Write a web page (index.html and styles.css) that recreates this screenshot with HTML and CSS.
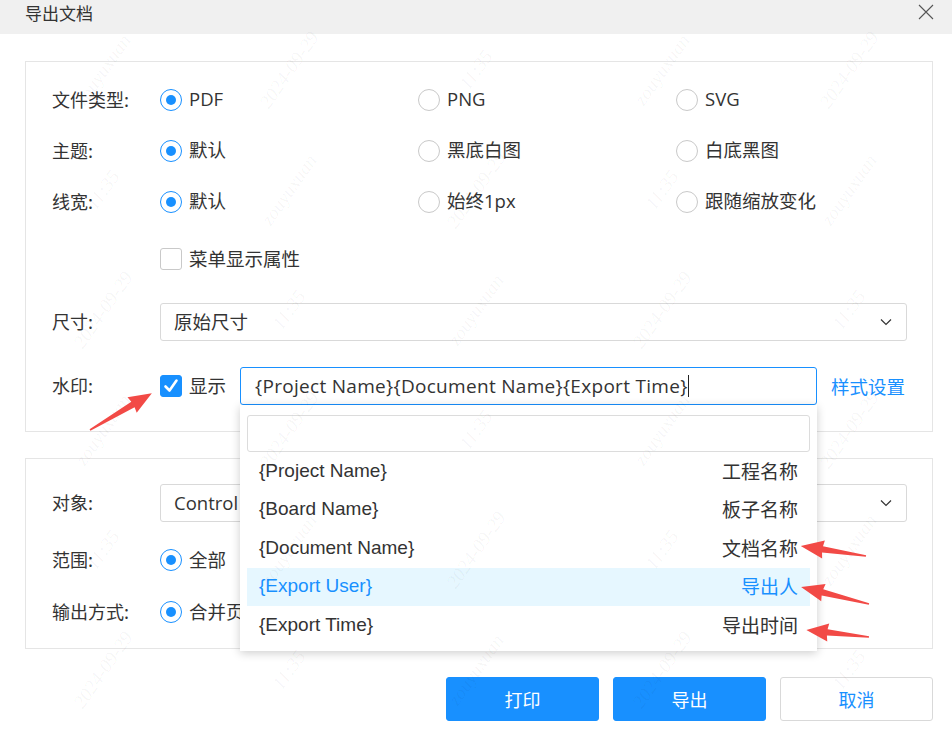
FILE: index.html
```html
<!DOCTYPE html>
<html lang="zh-CN">
<head>
<meta charset="utf-8">
<title>导出文档</title>
<link rel="stylesheet" href="styles.css">
</head>
<body>
<div class="dialog">
  <div class="header">
    <span class="title">导出文档</span>
    <svg class="close" width="16" height="16" viewBox="0 0 16 16"><path d="M1 1L15 15M15 1L1 15" stroke="#555" stroke-width="1.1" fill="none"/></svg>
  </div>

  <div class="content">
    <section class="group group-top">
      <div class="row row-radio">
        <span class="label">文件类型:</span>
        <div class="options">
          <span class="opt"><span class="radio on"></span>PDF</span>
          <span class="opt"><span class="radio"></span>PNG</span>
          <span class="opt"><span class="radio"></span>SVG</span>
        </div>
      </div>
      <div class="row row-radio">
        <span class="label">主题:</span>
        <div class="options">
          <span class="opt"><span class="radio on"></span>默认</span>
          <span class="opt"><span class="radio"></span>黑底白图</span>
          <span class="opt"><span class="radio"></span>白底黑图</span>
        </div>
      </div>
      <div class="row row-radio">
        <span class="label">线宽:</span>
        <div class="options">
          <span class="opt"><span class="radio on"></span>默认</span>
          <span class="opt"><span class="radio"></span>始终1px</span>
          <span class="opt"><span class="radio"></span>跟随缩放变化</span>
        </div>
      </div>
      <div class="row row-check">
        <span class="label"></span>
        <span class="opt"><span class="checkbox"></span>菜单显示属性</span>
      </div>
      <div class="row row-select">
        <span class="label">尺寸:</span>
        <div class="select">
          <span>原始尺寸</span>
          <svg class="chevron" width="12" height="8" viewBox="0 0 12 8"><path d="M1 1.5L6 6.5L11 1.5" stroke="#333" stroke-width="1.2" fill="none"/></svg>
        </div>
      </div>
      <div class="row row-wm">
        <span class="label">水印:</span>
        <span class="opt wm-check"><span class="checkbox checked"><svg width="22" height="22" viewBox="0 0 22 22"><path d="M5.5 11.5L9.5 15.5L16.5 5.5" stroke="#fff" stroke-width="2.6" fill="none" stroke-linecap="round" stroke-linejoin="round"/></svg></span>显示</span>
        <div class="wm-wrap">
          <div class="wm-input">{Project Name}{Document Name}{Export Time}<span class="caret"></span></div>
          <div class="dropdown">
            <div class="dd-search"></div>
            <div class="dd-item"><span>{Project Name}</span><span>工程名称</span></div>
            <div class="dd-item"><span>{Board Name}</span><span>板子名称</span></div>
            <div class="dd-item"><span>{Document Name}</span><span>文档名称</span></div>
            <div class="dd-item active"><span>{Export User}</span><span>导出人</span></div>
            <div class="dd-item"><span>{Export Time}</span><span>导出时间</span></div>
          </div>
        </div>
        <span class="link">样式设置</span>
      </div>
    </section>

    <section class="group group-bottom">
      <div class="row row-select2">
        <span class="label">对象:</span>
        <div class="select">
          <span class="clip">Control</span>
          <svg class="chevron" width="12" height="8" viewBox="0 0 12 8"><path d="M1 1.5L6 6.5L11 1.5" stroke="#333" stroke-width="1.2" fill="none"/></svg>
        </div>
      </div>
      <div class="row row-range">
        <span class="label">范围:</span>
        <span class="opt"><span class="radio on"></span>全部</span>
      </div>
      <div class="row row-output">
        <span class="label">输出方式:</span>
        <span class="opt"><span class="radio on"></span>合并页</span>
      </div>
    </section>

    <div class="footer">
      <button class="btn primary">打印</button>
      <button class="btn primary">导出</button>
      <button class="btn">取消</button>
    </div>
  </div>

  <div class="watermark">
    <span class="wm-t">zouyuxuan</span><span class="wm-t">2024-09-29</span><span class="wm-t">11:35</span><span class="wm-t">zouyuxuan</span><span class="wm-t">2024-09-29</span>
    <span class="wm-t">11:35</span><span class="wm-t">zouyuxuan</span><span class="wm-t">2024-09-29</span><span class="wm-t">11:35</span><span class="wm-t">zouyuxuan</span>
    <span class="wm-t">2024-09-29</span><span class="wm-t">11:35</span><span class="wm-t">zouyuxuan</span><span class="wm-t">2024-09-29</span><span class="wm-t">11:35</span>
    <span class="wm-t">zouyuxuan</span><span class="wm-t">2024-09-29</span><span class="wm-t">11:35</span><span class="wm-t">zouyuxuan</span><span class="wm-t">2024-09-29</span>
    <span class="wm-t">11:35</span><span class="wm-t">zouyuxuan</span><span class="wm-t">2024-09-29</span><span class="wm-t">11:35</span><span class="wm-t">zouyuxuan</span>
    <span class="wm-t">2024-09-29</span><span class="wm-t">11:35</span><span class="wm-t">zouyuxuan</span><span class="wm-t">2024-09-29</span><span class="wm-t">11:35</span>
  </div>

  <svg class="arrows" width="952" height="740" viewBox="0 0 952 740">
    <g fill="#f24a46">
      <polygon transform="translate(90 430) rotate(-30.8)" points="0,-0.8 50,-3.2 49,-9 72,0 49,9 50,3.2 0,0.8"/>
      <polygon transform="translate(866 556) rotate(-171.3)" points="0,-0.8 44,-3.2 43,-9 66,0 43,9 44,3.2 0,0.8"/>
      <polygon transform="translate(869 604) rotate(-166)" points="0,-0.8 48,-3.2 47,-9 70,0 47,9 48,3.2 0,0.8"/>
      <polygon transform="translate(869 637) rotate(-173.7)" points="0,-0.8 42,-3.2 41,-9 63,0 41,9 42,3.2 0,0.8"/>
    </g>
  </svg>
</div>
</body>
</html>
```

FILE: styles.css
```css
* { box-sizing: border-box; }

html, body {
  margin: 0;
  padding: 0;
  background: #fff;
}

body {
  width: 952px;
  height: 740px;
  overflow: hidden;
  font-family: "Open Sans", "Noto Sans CJK SC", sans-serif;
  font-size: 18px;
  color: #333;
  line-height: 1.2;
}

.dialog {
  position: relative;
  width: 952px;
  height: 740px;
  overflow: hidden;
}

.header {
  height: 34px;
  background: #f0f0f0;
  display: flex;
  align-items: center;
  justify-content: space-between;
  padding: 0 18px 0 25px;
}

.title {
  font-family: "Noto Sans CJK SC", sans-serif;
  font-size: 17px;
  line-height: 20px;
  color: #333;
  margin-top: -9px;
}

.close { margin-top: -10px; }

.content {
  padding: 27px 19px 0 25px;
}

.group {
  border: 1px solid #e5e5e5;
  padding: 0 25px 0 26px;
  display: flex;
  flex-direction: column;
}

.group-top { padding-top: 12px; padding-bottom: 26px; }
.group-bottom { margin-top: 26px; padding-top: 25px; padding-bottom: 8px; }

.row {
  display: flex;
  align-items: center;
}

.label {
  width: 108px;
  flex: none;
  font-family: "Noto Sans CJK SC", sans-serif;
}

.row-radio { height: 51px; }
.row-check { height: 64px; }
.row-select { margin-top: 12px; }
.row-wm { margin-top: 26px; height: 38px; }
.row-range { margin-top: 14px; height: 48px; }
.row-output { height: 56px; }

.options {
  display: grid;
  grid-template-columns: 258px 258px 1fr;
  flex: 1;
}

.opt {
  display: inline-flex;
  align-items: center;
  gap: 7px;
  white-space: nowrap;
  font-size: 18.5px;
}

.radio {
  width: 22px;
  height: 22px;
  border: 1px solid #c9c9c9;
  border-radius: 50%;
  display: inline-flex;
  align-items: center;
  justify-content: center;
  flex: none;
}

.radio.on { border-color: #1890ff; }
.radio.on::after {
  content: "";
  width: 10px;
  height: 10px;
  border-radius: 50%;
  background: #1890ff;
}

.checkbox {
  width: 22px;
  height: 22px;
  border: 1px solid #c9c9c9;
  border-radius: 3px;
  flex: none;
  display: inline-flex;
}

.checkbox.checked {
  background: #1890ff;
  border-color: #1890ff;
}

.checkbox.checked svg { margin: -1px; }

.select {
  width: 747px;
  height: 38px;
  border: 1px solid #d9d9d9;
  border-radius: 3px;
  display: flex;
  align-items: center;
  justify-content: space-between;
  padding: 0 14px 0 13px;
  font-size: 18.5px;
}

.wm-check { width: 80px; }

.wm-wrap {
  position: relative;
  width: 577px;
  height: 38px;
  flex: none;
}

.wm-input {
  height: 38px;
  border: 1px solid #1890ff;
  border-radius: 3px;
  display: flex;
  align-items: center;
  padding-left: 14px;
  white-space: nowrap;
  font-size: 19px;
  letter-spacing: 0.3px;
}

.caret {
  display: inline-block;
  width: 1.5px;
  height: 22px;
  background: #222;
}

.link {
  margin-left: 14px;
  color: #1890ff;
  font-family: "Noto Sans CJK SC", sans-serif;
  font-size: 18.5px;
}

.dropdown {
  position: absolute;
  left: 0;
  top: 38px;
  width: 577px;
  height: 246px;
  background: #fff;
  box-shadow: 0 2px 9px rgba(0, 0, 0, 0.2);
  padding: 10px 7px 0 7px;
  z-index: 5;
}

.dd-search {
  height: 37px;
  border: 1px solid #dcdcdc;
  border-radius: 3px;
}

.dd-item {
  height: 38.5px;
  display: flex;
  align-items: center;
  justify-content: space-between;
  padding: 0 12px;
  font-family: "Liberation Sans", "Noto Sans CJK SC", sans-serif;
  font-size: 19px;
  color: #333;
}

.dd-item span:last-child { font-family: "Noto Sans CJK SC", sans-serif; }

.dd-item.active {
  background: #e6f7ff;
  color: #1890ff;
}

.footer {
  display: flex;
  justify-content: flex-end;
  gap: 14px;
  margin-top: 28px;
}

.btn {
  width: 153px;
  height: 44px;
  border: 1px solid #d9d9d9;
  border-radius: 3px;
  background: #fff;
  color: #1890ff;
  font-family: "Noto Sans CJK SC", sans-serif;
  font-size: 18px;
  padding: 0;
}

.btn.primary {
  background: #1890ff;
  border-color: #1890ff;
  color: #fff;
}

.watermark {
  position: absolute;
  left: 10px;
  top: 10px;
  right: 10px;
  bottom: 10px;
  pointer-events: none;
  z-index: 8;
  display: grid;
  grid-template-columns: repeat(5, 1fr);
  grid-template-rows: repeat(6, 1fr);
}

.wm-t {
  display: flex;
  align-items: center;
  justify-content: center;
  transform: rotate(-55deg);
  font-family: "Liberation Serif", serif;
  font-style: italic;
  font-size: 19px;
  color: rgba(0, 0, 0, 0.045);
  white-space: nowrap;
}

.arrows {
  position: absolute;
  left: 0;
  top: 0;
  z-index: 10;
  pointer-events: none;
}
```
